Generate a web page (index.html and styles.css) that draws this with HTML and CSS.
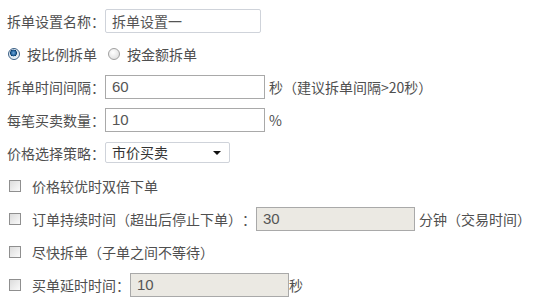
FILE: index.html
```html
<!DOCTYPE html>
<html lang="zh">
<head>
<meta charset="utf-8">
<link rel="stylesheet" href="styles.css">
</head>
<body>
<div class="form">
  <div class="row">
    <span class="label">拆单设置名称：</span><span class="input light">拆单设置一</span>
  </div>
  <div class="row radios">
    <span class="radio on"></span><span class="rtext">按比例拆单</span>
    <span class="radio"></span><span class="rtext">按金额拆单</span>
  </div>
  <div class="row">
    <span class="label">拆单时间间隔：</span><span class="input num">60</span><span class="after">秒（建议拆单间隔&gt;20秒）</span>
  </div>
  <div class="row">
    <span class="label">每笔买卖数量：</span><span class="input num">10</span><span class="after">%</span>
  </div>
  <div class="row">
    <span class="label">价格选择策略：</span><span class="select">市价买卖<span class="caret"></span></span>
  </div>
  <div class="row chk">
    <span class="box"></span><span class="label">价格较优时双倍下单</span>
  </div>
  <div class="row chk">
    <span class="box"></span><span class="label">订单持续时间（超出后停止下单）：</span><span class="input num dis">30</span><span class="after">分钟（交易时间）</span>
  </div>
  <div class="row chk">
    <span class="box"></span><span class="label">尽快拆单（子单之间不等待）</span>
  </div>
  <div class="row chk">
    <span class="box"></span><span class="label">买单延时时间：</span><span class="input num dis">10</span><span class="after tight">秒</span>
  </div>
</div>
</body>
</html>
```
FILE: styles.css
```css
html, body {
  margin: 0;
  padding: 0;
  background: #fff;
}
body {
  font-family: "Noto Sans CJK SC", "Liberation Sans", sans-serif;
  font-size: 14px;
  color: #4f4f4f;
  text-spacing-trim: space-all;
  font-kerning: none;
}
.form {
  padding: 4px 0 0 7px;
}
.row {
  display: flex;
  align-items: center;
  height: 33px;
  white-space: nowrap;
}
.label {
  line-height: 20px;
}
.input {
  box-sizing: border-box;
  width: 160px;
  height: 24px;
  border: 1px solid #a9a9a9;
  padding: 0 6px;
  line-height: 22px;
  font-size: 14px;
  color: #555;
}
.input.num {
  font-family: "Liberation Sans", Arial, sans-serif;
  font-size: 15px;
}
.input.light {
  width: 156px;
  border-color: #cfd3da;
  border-radius: 2px;
}
.input.dis {
  background: #ebe9e3;
  width: 159px;
}
.after {
  margin-left: 4px;
}
.after.tight {
  margin-left: 0;
}
.radios .radio {
  box-sizing: border-box;
  width: 12px;
  height: 12px;
  border-radius: 50%;
  border: 1px solid #a0a0a0;
  background: radial-gradient(circle at 40% 35%, #ffffff, #d8d8d8);
  margin-left: 1px;
}
.radios .radio.on {
  border-color: #3a5f85;
  background: radial-gradient(circle at 45% 40%, #6fa8dc 0, #1f5f99 2.5px, #0b3a66 3.2px, #d7e4ef 3.6px, #f2f6fa 6px);
}
.rtext {
  margin-left: 7px;
  margin-right: 10px;
}
.select {
  box-sizing: border-box;
  width: 125px;
  height: 21px;
  border: 1px solid #cfd3da;
  border-radius: 2px;
  padding: 0 6px;
  line-height: 19px;
  display: flex;
  align-items: center;
  justify-content: space-between;
  color: #333;
}
.caret {
  width: 0;
  height: 0;
  border-left: 4px solid transparent;
  border-right: 4px solid transparent;
  border-top: 4px solid #111;
  margin-right: 2px;
}
.chk .box {
  box-sizing: border-box;
  width: 12px;
  height: 12px;
  border: 1px solid #8f8f8f;
  background: linear-gradient(135deg, #dcdcdc, #fafafa);
  margin-left: 2px;
  margin-right: 11px;
}
```
